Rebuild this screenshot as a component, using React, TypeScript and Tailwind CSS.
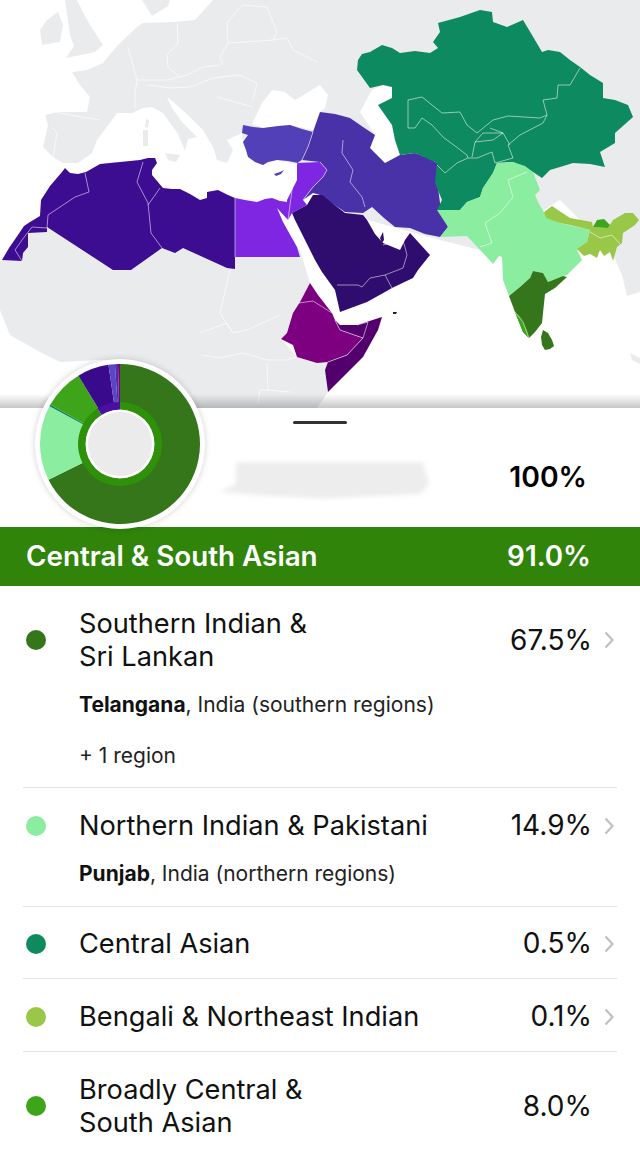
const land = [
  '213,0 640,0 640,292 627,296 622,275 613,255 600,240 560,200 480,250 440,240 350,215 300,165 277,160 263,165 248,157 243,142 242,133 227,140 233,150 227,163 217,160 213,147 203,130 190,117 178,106 167,97 172,108 182,122 197,137 188,139 185,151 178,134 163,113 152,107 143,108 132,113 117,113 112,120 97,140 92,153 78,163 63,163 53,157 43,147 48,125 45,115 57,112 87,112 90,97 80,85 72,72 87,70 103,63 112,52 120,43 137,27 143,23 173,22 195,20',
  '142,0 170,0 168,6 152,16',
  '65,0 77,0 84,14 90,25 103,45 95,52 66,58 74,46 70,35',
  '40,30 47,20 58,12 63,25 60,42 42,45',
  '165,153 180,155 176,162 168,160',
  '143,130 148,130 148,146 143,146',
  '146,119 149,120 148,128 145,127',
  '0,262 20,235 60,200 235,200 300,250 310,283 300,302 287,333 281,339 297,357 328,362 325,370 328,392 317,408 125,408 130,375 120,360 100,360 60,362 40,352 10,335 0,310',
  '630,353 640,358 640,364 632,360',
]

const blackSea = '252,124 262,103 272,90 285,92 295,100 320,85 328,95 325,108 320,112 313,130 290,125 263,128'
const caspian = '392,125 378,105 392,98 392,87 383,85 372,90 360,112 375,135 370,148 385,163 400,155 395,140'

const shapes = [
  {
    fill: '#3d0a91',
    points:
      '2,260 9,248 20,232 24,226 30,222 40,216 41,200 50,186 62,172 65,168 70,173 78,174 86,172 100,164 120,162 140,160 148,158 155,158 157,163 152,170 152,175 163,188 172,189 180,189 190,194 200,200 207,198 207,192 218,190 228,195 235,198 235,269 227,268 183,248 175,253 162,248 131,270 113,270 47,227 47,232 28,233 28,247 23,253 22,261',
  },
  { fill: '#7f27e3', points: '235,198 245,200 257,202 265,199 272,198 280,201 288,202 288,220 277,208 283,222 297,247 300,257 235,257' },
  { fill: '#7f27e3', points: '297,163 320,162 327,170 323,177 313,187 303,200 307,205 292,213 288,220 287,200 292,190 297,180' },
  {
    fill: '#5140b8',
    points: '243,125 253,127 263,128 278,126 290,125 302,129 313,132 308,147 302,160 298,163 288,161 277,160 268,162 263,165 255,162 248,157 246,150 243,142 248,135 242,133',
  },
  { fill: '#5140b8', points: '274,174 280,172 284,170 281,174 276,176' },
  {
    fill: '#4a30a8',
    points:
      '320,112 335,114 350,118 363,127 375,135 370,148 385,163 400,155 415,153 428,158 437,163 437,180 440,203 448,227 440,237 425,234 410,228 395,227 384,218 372,207 363,213 345,212 320,195 313,193 303,200 313,187 323,177 327,170 320,162 302,160 308,147 313,132',
  },
  {
    fill: '#2e0a6e',
    points:
      '313,195 322,195 345,213 363,215 367,220 375,234 383,243 400,250 405,240 410,233 420,244 430,255 418,270 413,278 392,288 385,292 367,302 340,312 335,290 322,272 315,260 310,250 295,220 292,213 307,205',
  },
  { fill: '#2e0a6e', points: '380,238 383,232 384,240 382,243' },
  { fill: '#2e0a6e', points: '393,312 397,312 396,314 393,314' },
  {
    fill: '#7b0080',
    points: '310,283 318,295 332,313 335,320 340,330 363,338 347,355 328,362 317,363 297,357 293,345 281,339 287,333 293,313 300,302',
  },
  { fill: '#52006e', points: '335,320 340,325 357,325 382,317 378,330 363,357 345,375 328,392 325,370 328,362 347,355 363,338 340,330' },
  {
    fill: '#0f8a5f',
    points:
      '358,60 362,54 370,52 382,45 392,48 400,53 415,51 430,53 438,48 433,42 440,32 438,23 460,17 480,10 492,12 493,22 507,27 523,20 532,35 542,52 548,50 560,52 570,60 580,67 590,75 603,83 603,98 615,100 628,105 633,117 615,133 615,143 600,152 605,167 590,164 573,163 560,167 550,170 542,178 533,172 513,162 497,163 493,173 483,188 480,197 467,202 460,210 437,210 442,200 435,183 437,163 415,153 400,155 395,140 392,125 378,105 392,98 392,87 383,85 370,88 357,70',
  },
  {
    fill: '#8beda0',
    points:
      '437,210 460,210 467,202 480,197 483,188 493,173 497,163 513,162 525,166 533,172 540,190 535,195 538,202 545,214 560,223 590,230 587,242 577,250 582,260 567,275 563,276 548,282 543,273 533,271 530,278 520,287 509,296 503,280 502,257 499,256 493,264 483,253 467,236 440,237 448,227',
  },
  {
    fill: '#99c848',
    points:
      '544,212 552,206 570,218 592,222 593,227 608,228 613,220 625,213 633,213 639,220 635,225 623,233 622,243 617,247 613,261 610,252 604,256 600,250 597,258 590,254 584,256 577,249 587,242 590,230 570,225 560,223 546,218',
  },
  { fill: '#3ea51a', points: '593,227 597,220 604,219 610,225 608,228' },
  {
    fill: '#35761a',
    points:
      '509,296 520,287 530,278 533,271 543,273 548,282 563,276 567,277 555,288 545,294 543,313 542,323 535,332 529,338 523,332 515,312',
  },
  { fill: '#3ea51a', points: '515,312 520,316 527,330 529,338 523,332' },
  { fill: '#35761a', points: '543,330 548,333 552,340 554,346 550,349 545,350 542,345 541,337' },
]

const borders = [
  '85,173 89,192 75,197 48,215 47,228 32,227 22,240 15,250 22,261',
  '143,162 137,182 148,203 151,233 162,248',
  '160,188 148,205',
  '235,198 235,257',
  '313,132 308,147 302,160 298,163',
  '343,140 342,153 353,170 350,182 362,197 365,207',
  '320,162 327,170 323,177 313,187 303,200',
  '297,163 292,190 288,220',
  '408,128 408,100 422,97 442,113 460,112 467,125 477,133 493,120 508,116 540,118 547,115 543,100 557,98 558,85 570,85 580,68',
  '408,128 415,128 422,118 432,125 443,137 467,155 468,158 457,163 445,173 437,165',
  '468,158 477,158 492,152 495,163 513,158 508,145 520,135 543,123 547,115',
  '475,142 483,133 503,133 493,140 475,142 472,157',
  '490,128 503,133 510,145',
  '527,172 508,180 513,197 500,213 485,223 492,243 480,247',
  '337,285 358,285 362,287 370,278 385,275 392,288',
  '385,275 403,268 407,255 403,240 383,245',
  '299,303 313,301 332,313',
  '335,320 340,330 363,338 347,355 328,362',
  '357,325 368,322 363,338',
  '590,232 600,238 612,235 620,244',
  '515,312 523,322 529,338',
]

const landBorders = [
  '128,47 137,80 135,93 135,108',
  '177,23 178,43 167,55 168,67 180,77',
  '227,23 228,43 220,57 223,65',
  '137,80 167,80 187,75 203,67 220,65',
  '148,85 170,88 190,87 213,78 240,75 257,83 253,100',
  '217,97 253,107',
  '55,112 70,115 100,120',
  '52,127 57,133 53,157',
  '228,43 273,40 287,38 293,50 317,62',
  '227,23 242,5 267,7 277,32 273,40',
  '230,270 220,313 233,333 247,330 280,315',
  '200,333 227,323 233,333',
  '203,355 220,358 243,353 267,360 287,360 297,357',
  '267,363 268,390 260,390 258,403',
  '268,390 290,392',
]

const R1 = 80
const R2 = 42

const polar = (r: number, pct: number) => {
  const a = (pct / 100) * Math.PI * 2
  return `${(r * Math.sin(a)).toFixed(2)} ${(-r * Math.cos(a)).toFixed(2)}`
}

const wedge = (outer: number, inner: number, from: number, to: number) => {
  const large = to - from > 50 ? 1 : 0
  return `M${polar(outer, from)} A${outer} ${outer} 0 ${large} 1 ${polar(outer, to)} L${polar(inner, to)} A${inner} ${inner} 0 ${large} 0 ${polar(inner, from)} Z`
}

const slices = [
  { color: '#35761a', from: 0, to: 67.6 },
  { color: '#8beda0', from: 67.6, to: 82.8 },
  { color: '#0f8a5f', from: 82.8, to: 83.2 },
  { color: '#3ea51a', from: 83.2, to: 91.3 },
  { color: '#3a0a8c', from: 91.3, to: 97.7 },
  { color: '#5b45c4', from: 97.7, to: 99 },
  { color: '#4a2fa8', from: 99, to: 99.6 },
  { color: '#7b0080', from: 99.6, to: 100 },
]

const Chevron = () => (
  <svg width="10" height="18" viewBox="0 0 10 18" className="ml-[12px] mr-[3px] shrink-0">
    <polyline points="1.5,1.5 8.5,9 1.5,16.5" fill="none" stroke="#c0c0c0" strokeWidth="2.2" />
  </svg>
)

const Row = ({
  color,
  name,
  pct,
  chevron = true,
  className = '',
  children,
}: {
  color: string
  name: React.ReactNode
  pct: string
  chevron?: boolean
  className?: string
  children?: React.ReactNode
}) => (
  <div className={`border-b-[1.5px] border-[#e4e4e4] last:border-b-0 ${className}`}>
    <div className="flex items-center">
      <span className="ml-[3px] mr-[33px] h-5 w-5 shrink-0 rounded-full" style={{ backgroundColor: color }} />
      <div className="flex-1 text-[27.2px] leading-[33px] text-[#111]">{name}</div>
      <div className={`text-[28px] leading-[33px] text-[#111] ${chevron ? '' : 'mr-[25px]'}`}>{pct}</div>
      {chevron && <Chevron />}
    </div>
    {children}
  </div>
)

export default function App() {
  return (
    <div className="relative h-[1157px] w-[640px] overflow-hidden bg-white font-['Inter','Liberation_Sans',sans-serif]">
      <div className="relative h-[408px]">
        <svg width="640" height="408" viewBox="0 0 640 408" className="block">
          <defs>
            <filter id="soft" x="0" y="0" width="100%" height="100%">
              <feGaussianBlur stdDeviation="0.45" />
            </filter>
          </defs>
          <g filter="url(#soft)">
            {land.map((p, i) => (
              <polygon key={i} points={p} fill="#e9ebed" />
            ))}
            {landBorders.map((p, i) => (
              <polyline key={i} points={p} fill="none" stroke="#f8f9fa" strokeWidth="0.9" />
            ))}
            <polygon points={blackSea} fill="#fff" />
            <polygon points={caspian} fill="#fff" />
            {shapes.map((s, i) => (
              <polygon key={i} points={s.points} fill={s.fill} />
            ))}
            {borders.map((p, i) => (
              <polyline key={i} points={p} fill="none" stroke="#ffffff" strokeOpacity="0.6" strokeWidth="0.9" />
            ))}
          </g>
        </svg>
        <div className="absolute inset-x-0 bottom-0 h-[14px] bg-gradient-to-b from-transparent to-[#00000038]" />
      </div>

      <div className="absolute left-[35px] top-[359px] z-10 h-[170px] w-[170px] rounded-full bg-white shadow-[0_0_6px_rgba(0,0,0,0.18)]">
        <svg width="170" height="170" viewBox="-85 -85 170 170" className="block">
          {slices.map((s) => (
            <path key={s.from} d={wedge(R1, R2 - 1, s.from, s.to)} fill={s.color} />
          ))}
          <path d={wedge(R2, 34, 0, 91)} fill="#2f9009" />
          <path d={wedge(R2, 34, 91, 100)} fill="#4a0fa0" />
          <circle r="34.5" fill="#fff" />
          <circle r="32" fill="#ebebeb" />
        </svg>
      </div>

      <div className="flex h-[119px] flex-col">
        <div className="mx-auto mt-[13px] h-[3px] w-[54px] rounded-full bg-[#333]" />
        <div className="mt-[34px] flex h-[38px] items-center">
          <div className="ml-[219px] mt-[6px] h-[37px] w-[210px] blur-[2px]">
            <div className="h-full w-full bg-[#ededed] [clip-path:polygon(8%_3%,60%_0%,97%_3%,100%_60%,96%_88%,50%_100%,20%_92%,0%_82%,8%_62%)]" />
          </div>
          <div className="ml-auto mr-[53px] text-[28.3px] font-semibold leading-[33px] text-black">100%</div>
        </div>
      </div>

      <div className="flex h-[59px] items-center justify-between bg-[#2f8409] pl-[26px] pr-[49px] text-[27.8px] font-semibold text-white">
        <span>Central &amp; South Asian</span>
        <span>91.0%</span>
      </div>

      <div className="px-[23px]">
        <Row
          color="#35761a"
          pct="67.5%"
          className="pt-[21px] pb-[17px]"
          name={
            <>
              Southern Indian &amp;
              <br />
              Sri Lankan
            </>
          }
        >
          <div className="ml-[56px] mt-[18px] text-[21px] leading-7 text-[#222]">
            <b className="font-bold text-[#111]">Telangana</b>, India (southern regions)
          </div>
          <div className="ml-[56px] mt-[23px] text-[21px] leading-7 text-[#222]">+ 1 region</div>
        </Row>
        <Row color="#8beda0" pct="14.9%" className="pt-[21px] pb-[18px]" name="Northern Indian & Pakistani">
          <div className="ml-[56px] mt-[18px] text-[21px] leading-7 text-[#222]">
            <b className="font-bold text-[#111]">Punjab</b>, India (northern regions)
          </div>
        </Row>
        <Row color="#0f8a5f" pct="0.5%" className="pt-[20px] pb-[18px]" name="Central Asian" />
        <Row color="#99c848" pct="0.1%" className="pt-[21px] pb-[18px]" name="Bengali & Northeast Indian" />
        <Row
          color="#3ea51a"
          pct="8.0%"
          chevron={false}
          className="pt-[21px]"
          name={
            <>
              Broadly Central &amp;
              <br />
              South Asian
            </>
          }
        />
      </div>
    </div>
  )
}
